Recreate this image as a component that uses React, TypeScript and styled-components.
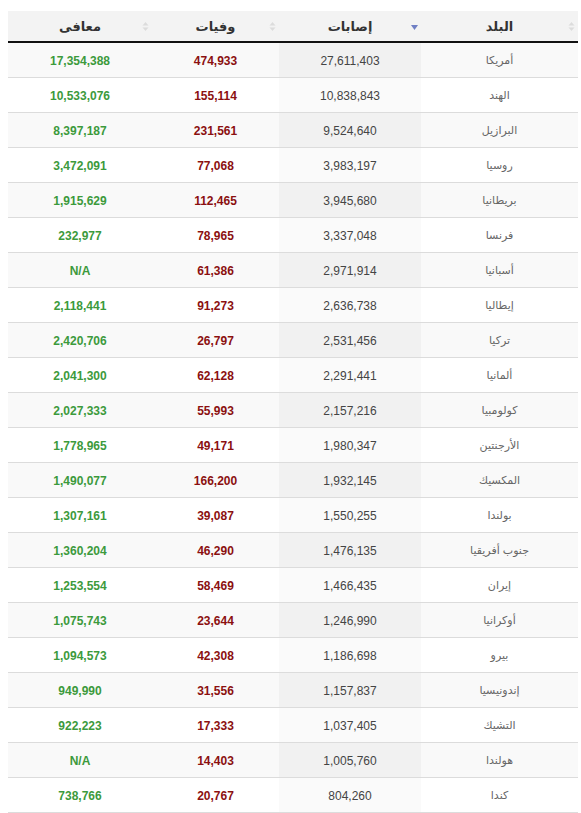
import React from "react";
import styled, { createGlobalStyle } from "styled-components";

const GlobalStyle = createGlobalStyle`
  html, body {
    margin: 0;
    padding: 0;
    background: #fff;
  }
  body {
    font-family: "Liberation Sans", "DejaVu Sans", Arial, sans-serif;
  }
`;

const Page = styled.div`
  padding: 11px 3px 0 8px;
`;

const Table = styled.table`
  direction: rtl;
  width: 570px;
  border-collapse: collapse;
  table-layout: fixed;
  font-size: 12px;
`;

const HeadCell = styled.th<{ $w: number }>`
  width: ${(p) => p.$w}px;
  height: 30px;
  padding: 0;
  background: #f3f3f3;
  border-bottom: 2px solid #111;
  color: #333;
  font-size: 13px;
  font-weight: bold;
`;

const HeadInner = styled.div`
  display: grid;
  grid-template-columns: 14px 1fr 14px;
  align-items: center;
`;

const SortIcon = styled.span`
  display: flex;
  justify-content: center;
  padding-top: 1px;
`;

const Row = styled.tr<{ $odd: boolean }>`
  height: 35px;
  border-bottom: 1px solid #dcdcdc;
  background: ${(p) => (p.$odd ? "#f9f9f9" : "#fff")};
`;

const Cell = styled.td<{ $tone?: "country" | "cases" | "deaths" | "recovered"; $sorted?: boolean; $odd?: boolean }>`
  padding: 2px 0 0;
  text-align: center;
  background: ${(p) => (p.$sorted ? (p.$odd ? "#f1f1f1" : "#fafafa") : "transparent")};
  color: ${(p) =>
    p.$tone === "country"
      ? "#666"
      : p.$tone === "deaths"
      ? "#8b1010"
      : p.$tone === "recovered"
      ? "#3c9a3c"
      : "#444"};
  font-weight: ${(p) => (p.$tone === "deaths" || p.$tone === "recovered" ? "bold" : "normal")};
  font-size: ${(p) => (p.$tone === "country" ? "11px" : "12px")};
`;

const Sort = ({ active }: { active?: boolean }) => (
  <SortIcon>
    <svg width="7" height="11" viewBox="0 0 7 11">
      {active ? (
        <path d="M0 4 L7 4 L3.5 9 Z" fill="#6f7fc4" />
      ) : (
        <>
          <path d="M0.5 4.5 L6.5 4.5 L3.5 1 Z" fill="#dcdcdc" />
          <path d="M0.5 6.5 L6.5 6.5 L3.5 10 Z" fill="#dcdcdc" />
        </>
      )}
    </svg>
  </SortIcon>
);

const Head = ({ label, w, active }: { label: string; w: number; active?: boolean }) => (
  <HeadCell $w={w}>
    <HeadInner>
      <Sort active={active} />
      <span>{label}</span>
      <span />
    </HeadInner>
  </HeadCell>
);

const rows: [string, string, string, string][] = [
  ["أمريكا", "27,611,403", "474,933", "17,354,388"],
  ["الهند", "10,838,843", "155,114", "10,533,076"],
  ["البرازيل", "9,524,640", "231,561", "8,397,187"],
  ["روسيا", "3,983,197", "77,068", "3,472,091"],
  ["بريطانيا", "3,945,680", "112,465", "1,915,629"],
  ["فرنسا", "3,337,048", "78,965", "232,977"],
  ["أسبانيا", "2,971,914", "61,386", "N/A"],
  ["إيطاليا", "2,636,738", "91,273", "2,118,441"],
  ["تركيا", "2,531,456", "26,797", "2,420,706"],
  ["ألمانيا", "2,291,441", "62,128", "2,041,300"],
  ["كولومبيا", "2,157,216", "55,993", "2,027,333"],
  ["الأرجنتين", "1,980,347", "49,171", "1,778,965"],
  ["المكسيك", "1,932,145", "166,200", "1,490,077"],
  ["بولندا", "1,550,255", "39,087", "1,307,161"],
  ["جنوب أفريقيا", "1,476,135", "46,290", "1,360,204"],
  ["إيران", "1,466,435", "58,469", "1,253,554"],
  ["أوكرانيا", "1,246,990", "23,644", "1,075,743"],
  ["بيرو", "1,186,698", "42,308", "1,094,573"],
  ["إندونيسيا", "1,157,837", "31,556", "949,990"],
  ["التشيك", "1,037,405", "17,333", "922,223"],
  ["هولندا", "1,005,760", "14,403", "N/A"],
  ["كندا", "804,260", "20,767", "738,766"],
];

export default function App() {
  return (
    <>
      <GlobalStyle />
      <Page>
        <Table>
          <thead>
            <tr>
              <Head label="البلد" w={157} />
              <Head label="إصابات" w={142} active />
              <Head label="وفيات" w={127} />
              <Head label="معافى" w={144} />
            </tr>
          </thead>
          <tbody>
            {rows.map(([country, cases, deaths, recovered], i) => {
              const odd = i % 2 === 0;
              return (
                <Row key={country} $odd={odd}>
                  <Cell $tone="country">{country}</Cell>
                  <Cell $tone="cases" $sorted $odd={odd}>
                    {cases}
                  </Cell>
                  <Cell $tone="deaths">{deaths}</Cell>
                  <Cell $tone="recovered">{recovered}</Cell>
                </Row>
              );
            })}
          </tbody>
        </Table>
      </Page>
    </>
  );
}
